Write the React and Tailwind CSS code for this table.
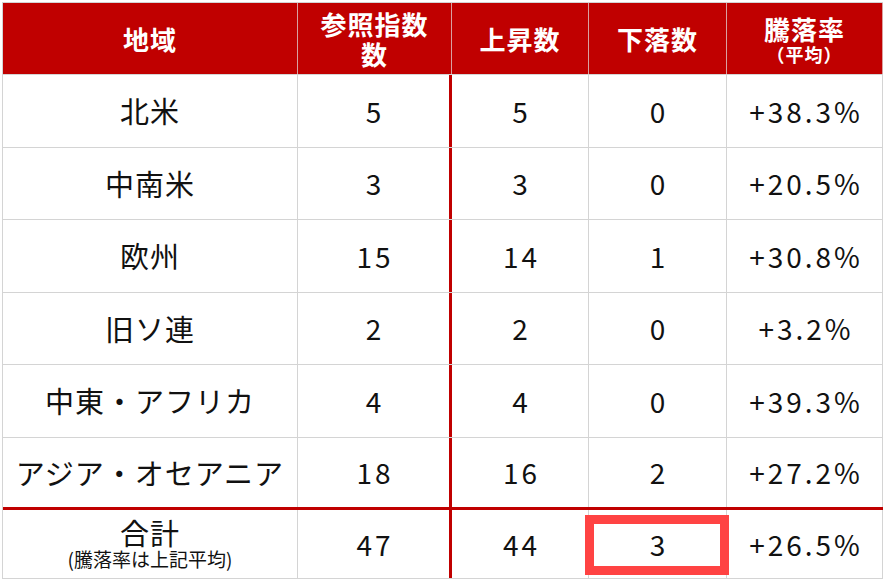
const header = [
  { lines: ["地域"] },
  { lines: ["参照指数", "数"] },
  { lines: ["上昇数"] },
  { lines: ["下落数"] },
  { lines: ["騰落率"], sub: "（平均）" },
];

const rows = [
  ["北米", "5", "5", "0", "+38.3%"],
  ["中南米", "3", "3", "0", "+20.5%"],
  ["欧州", "15", "14", "1", "+30.8%"],
  ["旧ソ連", "2", "2", "0", "+3.2%"],
  ["中東・アフリカ", "4", "4", "0", "+39.3%"],
  ["アジア・オセアニア", "18", "16", "2", "+27.2%"],
];

const widths = ["w-[295px]", "w-[154px]", "w-[137px]", "w-[138px]", "w-[156px]"];

function Cell({ i, children, className = "" }) {
  const rightBorder =
    i === 1 ? "border-r-[3px] border-r-[#c00000]" : "border-r border-r-[#d4d4d4]";
  const text = i === 0 ? "text-[29px] tracking-[1px]" : "text-[28px] tracking-[3px] pl-[3px]";
  return (
    <div
      className={`${widths[i]} ${rightBorder} ${text} shrink-0 flex flex-col items-center justify-center ${className}`}
    >
      {children}
    </div>
  );
}

export default function App() {
  return (
    <div
      className="relative w-[883px] h-[582px] bg-white overflow-hidden pl-[2px] pt-[2px]"
      style={{ fontFamily: '"Noto Sans CJK JP", "Noto Sans", sans-serif' }}
    >
      <div className="border-l border-t border-[#d4d4d4] w-[881px]">
        {/* header */}
        <div className="flex h-[72px] bg-[#c00000] text-white font-bold border-b border-[#d4d4d4]">
          {header.map((h, i) => (
            <div
              key={i}
              className={`${widths[i]} shrink-0 flex flex-col items-center justify-center border-r border-[#d9a0a0]`}
            >
              {h.lines.map((l) => (
                <span key={l} className="block text-[26px] leading-[30px] tracking-[1px]">
                  {l}
                </span>
              ))}
              {h.sub && (
                <span className="block text-[18px] leading-[20px] tracking-[1px]">{h.sub}</span>
              )}
            </div>
          ))}
        </div>

        {/* body */}
        {rows.map((r, ri) => (
          <div
            key={ri}
            className={`flex h-[72.5px] text-[#111] ${
              ri === rows.length - 1
                ? "border-b-[3px] border-b-[#c00000]"
                : "border-b border-b-[#d4d4d4]"
            }`}
          >
            {r.map((v, i) => (
              <Cell key={i} i={i}>
                {v}
              </Cell>
            ))}
          </div>
        ))}

        {/* total */}
        <div className="flex h-[69px] text-[#111] border-b border-b-[#d4d4d4]">
          <Cell i={0}>
            <span className="block leading-[30px]">合計</span>
            <span className="block text-[19px] leading-[24px] tracking-normal">(騰落率は上記平均)</span>
          </Cell>
          <Cell i={1}>47</Cell>
          <Cell i={2}>44</Cell>
          <Cell i={3}>3</Cell>
          <Cell i={4}>+26.5%</Cell>
        </div>
      </div>

      {/* highlight box */}
      <div className="absolute left-[585px] top-[515px] w-[144px] h-[60px] border-[9px] border-[#ff4343]" />
    </div>
  );
}
